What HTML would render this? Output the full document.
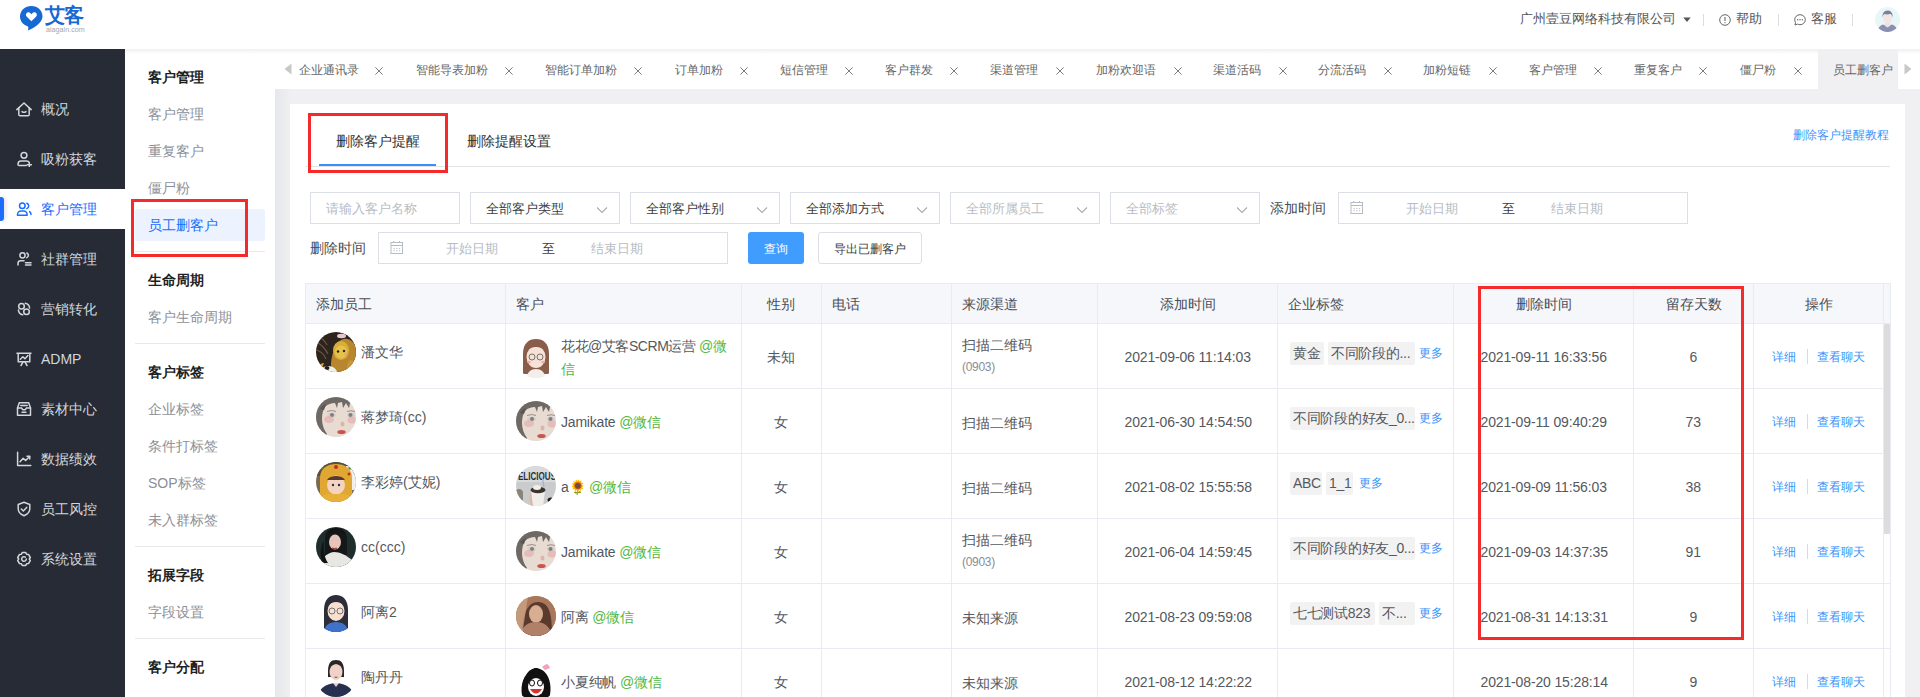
<!DOCTYPE html><html><head><meta charset="utf-8"><style>
*{box-sizing:border-box;margin:0;padding:0}
html,body{width:1920px;height:697px;overflow:hidden;background:#fff;font-family:"Liberation Sans",sans-serif;color:#606266}
div,span{position:absolute;white-space:nowrap}
.t{line-height:1}
</style></head><body><div style="left:0;top:0;width:1920px;height:49px;background:#fff"></div>
<div style="left:125px;top:49px;width:1795px;height:6px;background:linear-gradient(#ededed,rgba(255,255,255,0))"></div>
<div style="left:0;top:49px;width:125px;height:648px;background:#262b35"></div>
<svg style="position:absolute;left:19px;top:5px" width="26" height="28" viewBox="0 0 26 28">
<path d="M12.5 1C6 1 1 5.6 1 11.6c0 4.8 3.3 8.3 7.4 9.7.9.4 1.2 1.2.9 2.2l-.4 2.1c5.8-2.6 14.6-8 14.6-14.2C23.5 5.6 18.8 1 12.5 1z" fill="#1768d2"/>
<path d="M12.4 16.2l-4.6-4.5c-1.3-1.3-1.1-3.2.3-4 1.3-.8 2.7-.3 3.4.6l.9.9.9-.9c.8-.9 2.2-1.4 3.4-.6 1.4.8 1.6 2.7.3 4z" fill="#fff"/>
</svg>
<span style="left:45px;top:4px;font-size:20px;line-height:22px;color:#1768d2;font-weight:bold;letter-spacing:-1px">艾客</span>
<span style="left:46px;top:26px;font-size:7.2px;line-height:7px;color:#a8a8a8">aiagain.com</span>
<span style="left:1520px;top:10px;font-size:13px;line-height:18px;color:#555">广州壹豆网络科技有限公司</span>
<svg style="position:absolute;left:1683px;top:17px" width="8" height="6"><path d="M0.3 0.5h7.4l-3.7 4.6z" fill="#555"/></svg>
<div style="left:1703px;top:14px;width:1px;height:12px;background:#ddd"></div>
<div style="left:1778px;top:14px;width:1px;height:12px;background:#ddd"></div>
<div style="left:1852px;top:14px;width:1px;height:12px;background:#ddd"></div>
<svg style="position:absolute;left:1719px;top:14px" width="12" height="12" viewBox="0 0 12 12"><circle cx="6" cy="6" r="5.3" fill="none" stroke="#666" stroke-width="1"/><path d="M6 3v4M6 8.2v1" stroke="#666" stroke-width="1.1"/></svg>
<span style="left:1736px;top:10px;font-size:13px;line-height:18px;color:#555">帮助</span>
<svg style="position:absolute;left:1794px;top:14px" width="12" height="12" viewBox="0 0 12 12"><path d="M6 .7C3 .7.7 2.9.7 5.7c0 1 .3 1.9.8 2.7L1 11l2.6-.9c.7.4 1.5.6 2.4.6 3 0 5.3-2.2 5.3-5S9 .7 6 .7z" fill="none" stroke="#666" stroke-width="1"/><circle cx="3.7" cy="5.8" r=".7" fill="#666"/><circle cx="6" cy="5.8" r=".7" fill="#666"/><circle cx="8.3" cy="5.8" r=".7" fill="#666"/></svg>
<span style="left:1811px;top:10px;font-size:13px;line-height:18px;color:#555">客服</span>
<svg style="position:absolute;left:1875px;top:7px" width="25" height="25" viewBox="0 0 25 25">
<defs><clipPath id="ac"><circle cx="12.5" cy="12.5" r="12.5"/></clipPath></defs>
<g clip-path="url(#ac)"><rect width="25" height="25" fill="#e9f6f7"/>
<path d="M2 25c.5-4 3-6.5 6-7.5l4.5 2 4.5-2c3 1 5.5 3.5 6 7.5z" fill="#8a90b2"/>
<path d="M10 15h5v4l-2.5 1.5L10 19z" fill="#ece2df"/>
<ellipse cx="12.5" cy="11" rx="4.5" ry="5.8" fill="#f1e6e3"/>
<path d="M7.6 10.5c-.6-4 1.5-7 4.9-7s5.6 2.6 5 7c-.4-1.8-1.2-3.2-2.2-3.7-1.6.8-4.4.8-6 .2-.8.6-1.4 1.900-1.7 3.5z" fill="#7a80a0"/>
</g></svg>
<span style="left:41px;top:88.5px;font-size:14px;line-height:40px;color:#d3d6db">概况</span>
<svg style="position:absolute;left:16px;top:100.5px" width="16" height="16" viewBox="0 0 16 16" fill="none" stroke="#d3d6db" stroke-width="1.5" stroke-linejoin="round" stroke-linecap="round"><path d="M.8 8.6L8 2l7.2 6.6"/><path d="M2.8 6.9v6.6c0 .8.5 1.3 1.3 1.3h7.8c.8 0 1.3-.5 1.3-1.3V6.9"/><path d="M6 10.6q2 1.4 4 0"/></svg>
<span style="left:41px;top:138.5px;font-size:14px;line-height:40px;color:#d3d6db">吸粉获客</span>
<svg style="position:absolute;left:16px;top:150.5px" width="16" height="16" viewBox="0 0 16 16" fill="none" stroke="#d3d6db" stroke-width="1.5" stroke-linejoin="round" stroke-linecap="round"><circle cx="8" cy="4.3" r="2.9"/><path d="M10.3 14.6H3c-.6 0-1-.4-1-1v-.4c0-1.7 1.4-3.1 3.1-3.1h5.6c1.1 0 2.1.6 2.6 1.5"/><path d="M13.3 11.6v4.2M11.2 13.7h4.2"/></svg>
<div style="left:0;top:188.5px;width:125px;height:40px;background:#fff"></div>
<div style="left:0;top:196.5px;width:4px;height:24px;background:#1a6dff;border-radius:0 3px 3px 0;box-shadow:2px 0 4px rgba(0,0,0,.12)"></div>
<span style="left:41px;top:188.5px;font-size:14px;line-height:40px;color:#1a6dff">客户管理</span>
<svg style="position:absolute;left:16px;top:200.5px" width="16" height="16" viewBox="0 0 16 16" fill="none" stroke="#1a6dff" stroke-width="1.5" stroke-linejoin="round" stroke-linecap="round"><circle cx="6.3" cy="4.8" r="2.8"/><path d="M1.5 14.3v-.8c0-2 1.6-3.5 3.5-3.5h2.6c2 0 3.5 1.6 3.5 3.5v.8z"/><path d="M10.8 2.2c1.2.5 1.9 1.5 1.9 2.7s-.8 2.2-1.9 2.7M13.6 10.6c.9.7 1.4 1.8 1.4 3"/></svg>
<span style="left:41px;top:238.5px;font-size:14px;line-height:40px;color:#d3d6db">社群管理</span>
<svg style="position:absolute;left:16px;top:250.5px" width="16" height="16" viewBox="0 0 16 16" fill="none" stroke="#d3d6db" stroke-width="1.5" stroke-linejoin="round" stroke-linecap="round"><circle cx="6.5" cy="4.3" r="2.6"/><path d="M10.8 2c1 .5 1.6 1.3 1.6 2.3s-.6 1.9-1.6 2.3"/><path d="M2 14V12.4c0-1.5 1.2-2.6 2.6-2.6H8"/><path d="M9.5 11.8h5.5M9.5 14h5.5"/></svg>
<span style="left:41px;top:288.5px;font-size:14px;line-height:40px;color:#d3d6db">营销转化</span>
<svg style="position:absolute;left:16px;top:300.5px" width="16" height="16" viewBox="0 0 16 16" fill="none" stroke="#d3d6db" stroke-width="1.5" stroke-linejoin="round" stroke-linecap="round"><circle cx="5.5" cy="5.3" r="2.8"/><circle cx="10.5" cy="10.8" r="2.8"/><path d="M9.3 2.3c2.3.5 4 2.4 4.3 4.7M6.7 13.8c-2.3-.5-4-2.4-4.3-4.7"/></svg>
<span style="left:41px;top:338.5px;font-size:14px;line-height:40px;color:#d3d6db">ADMP</span>
<svg style="position:absolute;left:16px;top:350.5px" width="16" height="16" viewBox="0 0 16 16" fill="none" stroke="#d3d6db" stroke-width="1.5" stroke-linejoin="round" stroke-linecap="round"><path d="M1 2.2h14M2.2 2.2v8.5h11.6V2.2"/><path d="M4.3 8.3l2.6-2.6 2 2 3-3.2"/><path d="M5 14.5l2.2-3.8M11 14.5l-2.2-3.8"/></svg>
<span style="left:41px;top:388.5px;font-size:14px;line-height:40px;color:#d3d6db">素材中心</span>
<svg style="position:absolute;left:16px;top:400.5px" width="16" height="16" viewBox="0 0 16 16" fill="none" stroke="#d3d6db" stroke-width="1.5" stroke-linejoin="round" stroke-linecap="round"><path d="M3.3 1.8h9.4l1.8 5.3v7.2h-13V7.1z"/><path d="M1.5 7.1h4.2l1 1.6h2.6l1-1.6h4.2"/><path d="M4.8 4.5h6.4M6 11.3h4"/></svg>
<span style="left:41px;top:438.5px;font-size:14px;line-height:40px;color:#d3d6db">数据绩效</span>
<svg style="position:absolute;left:16px;top:450.5px" width="16" height="16" viewBox="0 0 16 16" fill="none" stroke="#d3d6db" stroke-width="1.5" stroke-linejoin="round" stroke-linecap="round"><path d="M1.6 1.2v13.3h13.2"/><path d="M4 10.8l3.2-3.6 2.4 2.3 4-4"/><path d="M11 5.3h2.7V8"/></svg>
<span style="left:41px;top:488.5px;font-size:14px;line-height:40px;color:#d3d6db">员工风控</span>
<svg style="position:absolute;left:16px;top:500.5px" width="16" height="16" viewBox="0 0 16 16" fill="none" stroke="#d3d6db" stroke-width="1.5" stroke-linejoin="round" stroke-linecap="round"><path d="M8 1.3l5.8 2.2v4.3c0 3.4-2.4 5.6-5.8 7-3.4-1.4-5.8-3.6-5.8-7V3.5z"/><path d="M5.3 8l2 2 3.4-3.6"/></svg>
<span style="left:41px;top:538.5px;font-size:14px;line-height:40px;color:#d3d6db">系统设置</span>
<svg style="position:absolute;left:16px;top:550.5px" width="16" height="16" viewBox="0 0 16 16" fill="none" stroke="#d3d6db" stroke-width="1.5" stroke-linejoin="round" stroke-linecap="round"><path d="M6.2 1.6h3.6l.8 1.7 1.9.1 1.8 3.1-1 1.5 1 1.5-1.8 3.1-1.9.1-.8 1.7H6.2l-.8-1.7-1.9-.1L1.7 9.5l1-1.5-1-1.5 1.8-3.1 1.9-.1z"/><path d="M10.3 8a2.3 2.3 0 1 1-1-1.9"/></svg>
<div style="left:125px;top:49px;width:150px;height:648px;background:#fff"></div>
<span style="left:148px;top:67px;font-size:14px;line-height:20px;color:#1f1f1f;font-weight:bold">客户管理</span>
<span style="left:148px;top:104px;font-size:14px;line-height:20px;color:#8b8f97;font-weight:normal">客户管理</span>
<span style="left:148px;top:140.5px;font-size:14px;line-height:20px;color:#8b8f97;font-weight:normal">重复客户</span>
<span style="left:148px;top:177.5px;font-size:14px;line-height:20px;color:#8b8f97;font-weight:normal">僵尸粉</span>
<div style="left:135px;top:209px;width:130px;height:32px;background:#ecf3fe;border-radius:2px"></div>
<span style="left:148px;top:214.5px;font-size:14px;line-height:20px;color:#1a6dff;font-weight:normal">员工删客户</span>
<div style="left:135px;top:251px;width:130px;height:1px;background:#e9e9e9"></div>
<span style="left:148px;top:269.5px;font-size:14px;line-height:20px;color:#1f1f1f;font-weight:bold">生命周期</span>
<span style="left:148px;top:306.5px;font-size:14px;line-height:20px;color:#8b8f97;font-weight:normal">客户生命周期</span>
<div style="left:135px;top:343px;width:130px;height:1px;background:#e9e9e9"></div>
<span style="left:148px;top:361.5px;font-size:14px;line-height:20px;color:#1f1f1f;font-weight:bold">客户标签</span>
<span style="left:148px;top:398.5px;font-size:14px;line-height:20px;color:#8b8f97;font-weight:normal">企业标签</span>
<span style="left:148px;top:435.5px;font-size:14px;line-height:20px;color:#8b8f97;font-weight:normal">条件打标签</span>
<span style="left:148px;top:472.5px;font-size:14px;line-height:20px;color:#8b8f97;font-weight:normal">SOP标签</span>
<span style="left:148px;top:509.5px;font-size:14px;line-height:20px;color:#8b8f97;font-weight:normal">未入群标签</span>
<div style="left:135px;top:546px;width:130px;height:1px;background:#e9e9e9"></div>
<span style="left:148px;top:564.5px;font-size:14px;line-height:20px;color:#1f1f1f;font-weight:bold">拓展字段</span>
<span style="left:148px;top:601.5px;font-size:14px;line-height:20px;color:#8b8f97;font-weight:normal">字段设置</span>
<div style="left:135px;top:638px;width:130px;height:1px;background:#e9e9e9"></div>
<span style="left:148px;top:656.5px;font-size:14px;line-height:20px;color:#1f1f1f;font-weight:bold">客户分配</span>
<div style="left:275px;top:89px;width:1645px;height:608px;background:#f0f0f3"></div>
<div style="left:275px;top:89px;width:16px;height:608px;background:linear-gradient(90deg,#e6e7ea,rgba(240,241,243,0))"></div>
<div style="left:275px;top:49px;width:1645px;height:40px;background:#fff"></div>
<div style="left:125px;top:49px;width:1795px;height:5px;background:linear-gradient(#efefef,rgba(255,255,255,0))"></div>
<div style="left:1818px;top:49px;width:80px;height:40px;background:#f0f0f3"></div>
<span style="left:299px;top:62px;font-size:12px;line-height:16px;color:#666">企业通讯录</span>
<svg style="position:absolute;left:374.5px;top:66.5px" width="8" height="8" viewBox="0 0 8 8"><path d="M.4 .4l7.2 7.2M7.6 .4L.4 7.6" stroke="#6a6e78" stroke-width=".9"/></svg>
<span style="left:416px;top:62px;font-size:12px;line-height:16px;color:#666">智能导表加粉</span>
<svg style="position:absolute;left:504.5px;top:66.5px" width="8" height="8" viewBox="0 0 8 8"><path d="M.4 .4l7.2 7.2M7.6 .4L.4 7.6" stroke="#6a6e78" stroke-width=".9"/></svg>
<span style="left:545px;top:62px;font-size:12px;line-height:16px;color:#666">智能订单加粉</span>
<svg style="position:absolute;left:633.5px;top:66.5px" width="8" height="8" viewBox="0 0 8 8"><path d="M.4 .4l7.2 7.2M7.6 .4L.4 7.6" stroke="#6a6e78" stroke-width=".9"/></svg>
<span style="left:675px;top:62px;font-size:12px;line-height:16px;color:#666">订单加粉</span>
<svg style="position:absolute;left:739.5px;top:66.5px" width="8" height="8" viewBox="0 0 8 8"><path d="M.4 .4l7.2 7.2M7.6 .4L.4 7.6" stroke="#6a6e78" stroke-width=".9"/></svg>
<span style="left:779.5px;top:62px;font-size:12px;line-height:16px;color:#666">短信管理</span>
<svg style="position:absolute;left:844.5px;top:66.5px" width="8" height="8" viewBox="0 0 8 8"><path d="M.4 .4l7.2 7.2M7.6 .4L.4 7.6" stroke="#6a6e78" stroke-width=".9"/></svg>
<span style="left:885px;top:62px;font-size:12px;line-height:16px;color:#666">客户群发</span>
<svg style="position:absolute;left:949.5px;top:66.5px" width="8" height="8" viewBox="0 0 8 8"><path d="M.4 .4l7.2 7.2M7.6 .4L.4 7.6" stroke="#6a6e78" stroke-width=".9"/></svg>
<span style="left:990px;top:62px;font-size:12px;line-height:16px;color:#666">渠道管理</span>
<svg style="position:absolute;left:1055.5px;top:66.5px" width="8" height="8" viewBox="0 0 8 8"><path d="M.4 .4l7.2 7.2M7.6 .4L.4 7.6" stroke="#6a6e78" stroke-width=".9"/></svg>
<span style="left:1095.6px;top:62px;font-size:12px;line-height:16px;color:#666">加粉欢迎语</span>
<svg style="position:absolute;left:1173.5px;top:66.5px" width="8" height="8" viewBox="0 0 8 8"><path d="M.4 .4l7.2 7.2M7.6 .4L.4 7.6" stroke="#6a6e78" stroke-width=".9"/></svg>
<span style="left:1213px;top:62px;font-size:12px;line-height:16px;color:#666">渠道活码</span>
<svg style="position:absolute;left:1278.5px;top:66.5px" width="8" height="8" viewBox="0 0 8 8"><path d="M.4 .4l7.2 7.2M7.6 .4L.4 7.6" stroke="#6a6e78" stroke-width=".9"/></svg>
<span style="left:1318px;top:62px;font-size:12px;line-height:16px;color:#666">分流活码</span>
<svg style="position:absolute;left:1383.5px;top:66.5px" width="8" height="8" viewBox="0 0 8 8"><path d="M.4 .4l7.2 7.2M7.6 .4L.4 7.6" stroke="#6a6e78" stroke-width=".9"/></svg>
<span style="left:1423.4px;top:62px;font-size:12px;line-height:16px;color:#666">加粉短链</span>
<svg style="position:absolute;left:1488.5px;top:66.5px" width="8" height="8" viewBox="0 0 8 8"><path d="M.4 .4l7.2 7.2M7.6 .4L.4 7.6" stroke="#6a6e78" stroke-width=".9"/></svg>
<span style="left:1528.5px;top:62px;font-size:12px;line-height:16px;color:#666">客户管理</span>
<svg style="position:absolute;left:1593.5px;top:66.5px" width="8" height="8" viewBox="0 0 8 8"><path d="M.4 .4l7.2 7.2M7.6 .4L.4 7.6" stroke="#6a6e78" stroke-width=".9"/></svg>
<span style="left:1634px;top:62px;font-size:12px;line-height:16px;color:#666">重复客户</span>
<svg style="position:absolute;left:1698.5px;top:66.5px" width="8" height="8" viewBox="0 0 8 8"><path d="M.4 .4l7.2 7.2M7.6 .4L.4 7.6" stroke="#6a6e78" stroke-width=".9"/></svg>
<span style="left:1739.6px;top:62px;font-size:12px;line-height:16px;color:#666">僵尸粉</span>
<svg style="position:absolute;left:1793.5px;top:66.5px" width="8" height="8" viewBox="0 0 8 8"><path d="M.4 .4l7.2 7.2M7.6 .4L.4 7.6" stroke="#6a6e78" stroke-width=".9"/></svg>
<span style="left:1832.6px;top:62px;font-size:12px;line-height:16px;color:#666">员工删客户</span>
<svg style="position:absolute;left:284px;top:63px" width="8" height="12"><path d="M7.5 .5v11L.5 6z" fill="#c8c8c8"/></svg>
<svg style="position:absolute;left:1904px;top:63px" width="8" height="12"><path d="M.5 .5v11L7.5 6z" fill="#c8c8c8"/></svg>
<div style="left:290px;top:104px;width:1615px;height:600px;background:#fff"></div>
<span style="left:336px;top:131px;font-size:14px;line-height:20px;color:#303133">删除客户提醒</span>
<span style="left:467px;top:131px;font-size:14px;line-height:20px;color:#303133">删除提醒设置</span>
<div style="left:306px;top:166px;width:1584px;height:1px;background:#e4e4e4"></div>
<div style="left:319px;top:164px;width:117px;height:2px;background:#3a8ef6"></div>
<span style="left:1793px;top:127px;font-size:12px;line-height:16px;color:#3f96fb">删除客户提醒教程</span>
<div style="left:308px;top:113px;width:140px;height:60px;border:3px solid #f52a2a"></div>
<div style="left:131px;top:199px;width:117px;height:58px;border:3px solid #f52a2a"></div>
<div style="left:310px;top:192px;width:150px;height:32px;border:1px solid #dcdfe6;background:#fff"></div>
<span style="left:326px;top:200px;font-size:13px;line-height:18px;color:#b8bcc4">请输入客户名称</span>
<div style="left:470px;top:192px;width:150px;height:32px;border:1px solid #dcdfe6;background:#fff"></div>
<span style="left:486px;top:200px;font-size:13px;line-height:18px;color:#3a3d42">全部客户类型</span>
<svg style="position:absolute;left:596px;top:206px" width="12" height="8" viewBox="0 0 12 8"><path d="M1 1.5l5 5 5-5" fill="none" stroke="#a8abb2" stroke-width="1.1"/></svg>
<div style="left:630px;top:192px;width:150px;height:32px;border:1px solid #dcdfe6;background:#fff"></div>
<span style="left:646px;top:200px;font-size:13px;line-height:18px;color:#3a3d42">全部客户性别</span>
<svg style="position:absolute;left:756px;top:206px" width="12" height="8" viewBox="0 0 12 8"><path d="M1 1.5l5 5 5-5" fill="none" stroke="#a8abb2" stroke-width="1.1"/></svg>
<div style="left:790px;top:192px;width:150px;height:32px;border:1px solid #dcdfe6;background:#fff"></div>
<span style="left:806px;top:200px;font-size:13px;line-height:18px;color:#3a3d42">全部添加方式</span>
<svg style="position:absolute;left:916px;top:206px" width="12" height="8" viewBox="0 0 12 8"><path d="M1 1.5l5 5 5-5" fill="none" stroke="#a8abb2" stroke-width="1.1"/></svg>
<div style="left:950px;top:192px;width:150px;height:32px;border:1px solid #dcdfe6;background:#fff"></div>
<span style="left:966px;top:200px;font-size:13px;line-height:18px;color:#b8bcc4">全部所属员工</span>
<svg style="position:absolute;left:1076px;top:206px" width="12" height="8" viewBox="0 0 12 8"><path d="M1 1.5l5 5 5-5" fill="none" stroke="#a8abb2" stroke-width="1.1"/></svg>
<div style="left:1110px;top:192px;width:150px;height:32px;border:1px solid #dcdfe6;background:#fff"></div>
<span style="left:1126px;top:200px;font-size:13px;line-height:18px;color:#b8bcc4">全部标签</span>
<svg style="position:absolute;left:1236px;top:206px" width="12" height="8" viewBox="0 0 12 8"><path d="M1 1.5l5 5 5-5" fill="none" stroke="#a8abb2" stroke-width="1.1"/></svg>
<span style="left:1270px;top:198px;font-size:14px;line-height:20px;color:#4a4d53">添加时间</span>
<span style="left:310px;top:238px;font-size:14px;line-height:20px;color:#4a4d53">删除时间</span>
<div style="left:1338px;top:192px;width:350px;height:32px;border:1px solid #dcdfe6;background:#fff"></div>
<svg style="position:absolute;left:1350px;top:201px" width="13" height="13" viewBox="0 0 13 13" fill="none" stroke="#b6bcc6" stroke-width="1"><rect x="1" y="1.5" width="11.5" height="11"/><path d="M1 4.5h11.5M3.5 0v2M9.5 0v2"/><path d="M3.5 7.5h1.2M6.2 7.5h1.2M8.9 7.5h1.2M3.5 9.7h1.2M6.2 9.7h1.2M8.9 9.7h1.2" stroke-width=".9"/></svg>
<span style="left:1406px;top:200px;font-size:13px;line-height:18px;color:#b8bcc4">开始日期</span>
<span style="left:1502px;top:200px;font-size:13px;line-height:18px;color:#3a3d42">至</span>
<span style="left:1551px;top:200px;font-size:13px;line-height:18px;color:#b8bcc4">结束日期</span>
<div style="left:378px;top:232px;width:350px;height:32px;border:1px solid #dcdfe6;background:#fff"></div>
<svg style="position:absolute;left:390px;top:241px" width="13" height="13" viewBox="0 0 13 13" fill="none" stroke="#b6bcc6" stroke-width="1"><rect x="1" y="1.5" width="11.5" height="11"/><path d="M1 4.5h11.5M3.5 0v2M9.5 0v2"/><path d="M3.5 7.5h1.2M6.2 7.5h1.2M8.9 7.5h1.2M3.5 9.7h1.2M6.2 9.7h1.2M8.9 9.7h1.2" stroke-width=".9"/></svg>
<span style="left:446px;top:240px;font-size:13px;line-height:18px;color:#b8bcc4">开始日期</span>
<span style="left:542px;top:240px;font-size:13px;line-height:18px;color:#3a3d42">至</span>
<span style="left:591px;top:240px;font-size:13px;line-height:18px;color:#b8bcc4">结束日期</span>
<div style="left:748px;top:232px;width:56px;height:32px;background:#419cff;border-radius:3px"></div>
<span style="left:764px;top:240px;font-size:12px;line-height:18px;color:#fff">查询</span>
<div style="left:818px;top:232px;width:104px;height:32px;border:1px solid #dcdfe6;border-radius:3px;background:#fff"></div>
<span style="left:834px;top:240px;font-size:12px;line-height:18px;color:#3a3d42">导出已删客户</span>
<div style="left:305px;top:283px;width:1585px;height:40px;background:#f5f7fa"></div>
<div style="left:305px;top:283px;width:1585px;height:1px;background:#e9ebf2"></div>
<div style="left:305px;top:323px;width:1585px;height:1px;background:#e9ebf2"></div>
<div style="left:305px;top:388px;width:1585px;height:1px;background:#e9ebf2"></div>
<div style="left:305px;top:453px;width:1585px;height:1px;background:#e9ebf2"></div>
<div style="left:305px;top:518px;width:1585px;height:1px;background:#e9ebf2"></div>
<div style="left:305px;top:583px;width:1585px;height:1px;background:#e9ebf2"></div>
<div style="left:305px;top:648px;width:1585px;height:1px;background:#e9ebf2"></div>
<div style="left:305px;top:713px;width:1585px;height:1px;background:#e9ebf2"></div>
<div style="left:305px;top:283px;width:1px;height:414px;background:#e9ebf2"></div>
<div style="left:505px;top:283px;width:1px;height:414px;background:#e9ebf2"></div>
<div style="left:741px;top:283px;width:1px;height:414px;background:#e9ebf2"></div>
<div style="left:821px;top:283px;width:1px;height:414px;background:#e9ebf2"></div>
<div style="left:951px;top:283px;width:1px;height:414px;background:#e9ebf2"></div>
<div style="left:1097px;top:283px;width:1px;height:414px;background:#e9ebf2"></div>
<div style="left:1277px;top:283px;width:1px;height:414px;background:#e9ebf2"></div>
<div style="left:1453px;top:283px;width:1px;height:414px;background:#e9ebf2"></div>
<div style="left:1633px;top:283px;width:1px;height:414px;background:#e9ebf2"></div>
<div style="left:1753px;top:283px;width:1px;height:414px;background:#e9ebf2"></div>
<div style="left:1883px;top:283px;width:1px;height:414px;background:#e9ebf2"></div>
<div style="left:1890px;top:283px;width:1px;height:414px;background:#e9ebf2"></div>
<div style="left:1884px;top:324px;width:6px;height:210px;background:#dcdcdc;border-radius:1px"></div>
<span style="left:316px;top:294px;font-size:14px;line-height:20px;color:#4a4e56">添加员工</span>
<span style="left:516px;top:294px;font-size:14px;line-height:20px;color:#4a4e56">客户</span>
<span style="left:767.0px;top:294px;font-size:14px;line-height:20px;color:#4a4e56">性别</span>
<span style="left:832px;top:294px;font-size:14px;line-height:20px;color:#4a4e56">电话</span>
<span style="left:962px;top:294px;font-size:14px;line-height:20px;color:#4a4e56">来源渠道</span>
<span style="left:1159.5px;top:294px;font-size:14px;line-height:20px;color:#4a4e56">添加时间</span>
<span style="left:1288px;top:294px;font-size:14px;line-height:20px;color:#4a4e56">企业标签</span>
<span style="left:1515.5px;top:294px;font-size:14px;line-height:20px;color:#4a4e56">删除时间</span>
<span style="left:1665.5px;top:294px;font-size:14px;line-height:20px;color:#4a4e56">留存天数</span>
<span style="left:1804.5px;top:294px;font-size:14px;line-height:20px;color:#4a4e56">操作</span>
<svg style="position:absolute;left:316px;top:331.5px" width="40" height="40" viewBox="0 0 40 40"><defs><clipPath id="cpe0"><circle cx="20" cy="20" r="20"/></clipPath></defs><g clip-path="url(#cpe0)"><rect width="40" height="40" fill="#2e241e"/>
<path d="M0 10c5 2 9 6 12 12M0 18c4 1 8 4 10 9M2 4c4 2 7 5 9 9" stroke="#6a5848" stroke-width="1.2" fill="none"/>
<path d="M16 40c-2-6-1-14 2-22 2-8 8-12 13-11 6 1 9 6 9 13v20z" fill="#b8862e"/>
<ellipse cx="25" cy="18.5" rx="8" ry="9.5" fill="#d8ae3a"/>
<ellipse cx="25" cy="20" rx="6" ry="6.5" fill="#e6c24a"/>
<circle cx="22" cy="19.5" r="1.2" fill="#2a2018"/><circle cx="28" cy="19" r="1.2" fill="#2a2018"/>
<ellipse cx="30" cy="22.5" rx="1.5" ry="1" fill="#e89a8a"/>
<path d="M34 28c4 0 6 4 6 8v4h-8c-2-4-1-10 2-12z" fill="#c89636"/>
<ellipse cx="25.5" cy="4" rx="4.5" ry="2.2" fill="#e8c8d0"/>
<path d="M4 40c1-4 4-6 8-6s8 2 9 6z" fill="#f2efe8"/><ellipse cx="11" cy="36" rx="2.5" ry="2" fill="#1e1e1e"/>
<path d="M3 34c1-2 3-3 5-3l-2 5z" fill="#d8a838"/></g></svg>
<span style="left:361px;top:341.5px;font-size:14px;line-height:20px;color:#55585e">潘文华</span>
<svg style="position:absolute;left:516px;top:337.5px" width="40" height="40" viewBox="0 0 40 40"><defs><clipPath id="cpc0"><circle cx="20" cy="20" r="20"/></clipPath></defs><g clip-path="url(#cpc0)"><rect width="40" height="40" fill="#fff"/>
<path d="M7 36V16C7 5 13 1 20 1s13 4 13 15v20z" fill="#8a5c4a"/>
<ellipse cx="20" cy="19" rx="9.5" ry="11" fill="#f6e1d6"/>
<path d="M10 14c2-7 6-9 10-9s8 2 10 9c-3-4-7-5-10-5s-7 1-10 5z" fill="#8a5c4a"/>
<circle cx="16" cy="19" r="3" fill="none" stroke="#666" stroke-width=".9"/><circle cx="24" cy="19" r="3" fill="none" stroke="#666" stroke-width=".9"/>
<ellipse cx="13" cy="24" rx="2" ry="1.3" fill="#f0b0a8"/><ellipse cx="27" cy="24" rx="2" ry="1.3" fill="#f0b0a8"/>
<path d="M11 40c0-6 4-9 9-9s9 3 9 9z" fill="#f2efea"/></g></svg>
<span style="left:561px;top:334.5px;font-size:14px;line-height:23px;letter-spacing:-0.45px;color:#55585e">花花@艾客SCRM运营 <span style="position:static;color:#52b840">@微</span><br><span style="position:static;color:#52b840">信</span></span>
<span style="left:767px;top:346.5px;font-size:14px;line-height:20px;color:#55585e">未知</span>
<span style="left:962px;top:334.5px;font-size:14px;line-height:20px;color:#55585e">扫描二维码</span>
<span style="left:962px;top:358.0px;font-size:12px;line-height:18px;letter-spacing:-0.3px;color:#8a8d93">(0903)</span>
<span style="left:1124.5px;top:346.5px;font-size:14px;line-height:20px;letter-spacing:-0.14px;color:#55585e">2021-09-06 11:14:03</span>
<div style="left:1290px;top:342.0px;width:34px;height:23px;background:#f2f2f2;border-radius:2px"></div>
<span style="left:1293px;top:343.0px;font-size:14px;line-height:20px;letter-spacing:-0.3px;color:#55585e">黄金</span>
<div style="left:1328px;top:342.0px;width:87px;height:23px;background:#f2f2f2;border-radius:2px"></div>
<span style="left:1331px;top:343.0px;font-size:14px;line-height:20px;letter-spacing:-0.3px;color:#55585e">不同阶段的...</span>
<span style="left:1419px;top:344.5px;font-size:12px;line-height:16px;color:#3892fa">更多</span>
<span style="left:1480.5px;top:346.5px;font-size:14px;line-height:20px;letter-spacing:-0.14px;color:#55585e">2021-09-11 16:33:56</span>
<span style="left:1689.5px;top:346.5px;font-size:14px;line-height:20px;color:#55585e">6</span>
<span style="left:1772px;top:347.5px;font-size:12px;line-height:18px;color:#3892fa">详细</span>
<div style="left:1807px;top:348.5px;width:1px;height:15px;background:#d8dade"></div>
<span style="left:1817px;top:347.5px;font-size:12px;line-height:18px;color:#3892fa">查看聊天</span>
<svg style="position:absolute;left:316px;top:396.5px" width="40" height="40" viewBox="0 0 40 40"><defs><clipPath id="cpe1"><circle cx="20" cy="20" r="20"/></clipPath></defs><g clip-path="url(#cpe1)"><rect width="40" height="40" fill="#e7dbd2"/>
<path d="M-1-1h42v10c-3-2-5-3-7-3l-1 5-3-5-3 5-1-6-4 1-1 5-2-5c-4 0-7 1-10 4-2 3-3 7-3 12 0 6 2 11 5 15l-2 4H-1z" fill="#6e6964"/>
<path d="M4 12c1-2 3-4 6-5l-2 6z" fill="#5a5652"/>
<ellipse cx="15.5" cy="18" rx="4.2" ry="2.6" fill="#d8cfc8"/><circle cx="16" cy="18" r="2" fill="#7a8088"/>
<ellipse cx="35" cy="18" rx="4" ry="2.6" fill="#d8cfc8"/><circle cx="34.5" cy="18" r="2" fill="#7a8088"/>
<path d="M11 14.5q5-2 9 0M31 14.5q4-1.5 8 0" stroke="#8a7a72" stroke-width=".8" fill="none"/>
<ellipse cx="13" cy="22.5" rx="5" ry="3.5" fill="#e2a8a8" opacity=".6"/><ellipse cx="36" cy="23" rx="4.5" ry="3.5" fill="#e2a8a8" opacity=".6"/>
<ellipse cx="26.5" cy="27" rx="2" ry="2.5" fill="#dda9a0" opacity=".8"/>
<ellipse cx="25.5" cy="35" rx="4.2" ry="2" fill="#c9564e"/></g></svg>
<span style="left:361px;top:406.5px;font-size:14px;line-height:20px;color:#55585e">蒋梦琦(cc)</span>
<svg style="position:absolute;left:516px;top:400.5px" width="40" height="40" viewBox="0 0 40 40"><defs><clipPath id="cpc1"><circle cx="20" cy="20" r="20"/></clipPath></defs><g clip-path="url(#cpc1)"><rect width="40" height="40" fill="#e7dbd2"/>
<path d="M-1-1h42v10c-3-2-5-3-7-3l-1 5-3-5-3 5-1-6-4 1-1 5-2-5c-4 0-7 1-10 4-2 3-3 7-3 12 0 6 2 11 5 15l-2 4H-1z" fill="#6e6964"/>
<path d="M4 12c1-2 3-4 6-5l-2 6z" fill="#5a5652"/>
<ellipse cx="15.5" cy="18" rx="4.2" ry="2.6" fill="#d8cfc8"/><circle cx="16" cy="18" r="2" fill="#7a8088"/>
<ellipse cx="35" cy="18" rx="4" ry="2.6" fill="#d8cfc8"/><circle cx="34.5" cy="18" r="2" fill="#7a8088"/>
<path d="M11 14.5q5-2 9 0M31 14.5q4-1.5 8 0" stroke="#8a7a72" stroke-width=".8" fill="none"/>
<ellipse cx="13" cy="22.5" rx="5" ry="3.5" fill="#e2a8a8" opacity=".6"/><ellipse cx="36" cy="23" rx="4.5" ry="3.5" fill="#e2a8a8" opacity=".6"/>
<ellipse cx="26.5" cy="27" rx="2" ry="2.5" fill="#dda9a0" opacity=".8"/>
<ellipse cx="25.5" cy="35" rx="4.2" ry="2" fill="#c9564e"/></g></svg>
<span style="left:561px;top:411.5px;font-size:14px;line-height:20px;letter-spacing:-0.2px;color:#55585e">Jamikate <span style="position:static;color:#52b840">@微信</span></span>
<span style="left:774px;top:411.5px;font-size:14px;line-height:20px;color:#55585e">女</span>
<span style="left:962px;top:412.5px;font-size:14px;line-height:20px;color:#55585e">扫描二维码</span>
<span style="left:1124.5px;top:411.5px;font-size:14px;line-height:20px;letter-spacing:-0.14px;color:#55585e">2021-06-30 14:54:50</span>
<div style="left:1290px;top:407.0px;width:125px;height:23px;background:#f2f2f2;border-radius:2px"></div>
<span style="left:1293px;top:408.0px;font-size:14px;line-height:20px;letter-spacing:-0.3px;color:#55585e">不同阶段的好友_0...</span>
<span style="left:1419px;top:409.5px;font-size:12px;line-height:16px;color:#3892fa">更多</span>
<span style="left:1480.5px;top:411.5px;font-size:14px;line-height:20px;letter-spacing:-0.14px;color:#55585e">2021-09-11 09:40:29</span>
<span style="left:1685.5px;top:411.5px;font-size:14px;line-height:20px;color:#55585e">73</span>
<span style="left:1772px;top:412.5px;font-size:12px;line-height:18px;color:#3892fa">详细</span>
<div style="left:1807px;top:413.5px;width:1px;height:15px;background:#d8dade"></div>
<span style="left:1817px;top:412.5px;font-size:12px;line-height:18px;color:#3892fa">查看聊天</span>
<svg style="position:absolute;left:316px;top:461.5px" width="40" height="40" viewBox="0 0 40 40"><defs><clipPath id="cpe2"><circle cx="20" cy="20" r="20"/></clipPath></defs><g clip-path="url(#cpe2)"><rect width="40" height="40" fill="#7a6a52"/>
<path d="M0 0h40v14H0z" fill="#5a4e40"/><path d="M30 4h10v24h-10z" fill="#f2f0ec"/>
<path d="M4 16C4 6 12 2 20 2s16 4 16 14v24H4z" fill="#e0a832"/>
<path d="M6 8l-4-4 3-1 3 3zM34 8l4-4-3-1-3 3z" fill="#5a8a3a"/><circle cx="20" cy="5" r="2" fill="#c82a20"/><circle cx="33" cy="12" r="1.5" fill="#c82a20"/>
<ellipse cx="20" cy="23" rx="9" ry="9.5" fill="#f3d4c2"/>
<path d="M11 18c2-3 5-4 9-4s7 1 9 4" fill="#5a3a2a"/><circle cx="17" cy="23" r="1.2" fill="#333"/><circle cx="23" cy="23" r="1.2" fill="#333"/>
<path d="M6 34c4-2 8-2 14-2s10 0 14 2v6H6z" fill="#e8b038"/></g></svg>
<span style="left:361px;top:471.5px;font-size:14px;line-height:20px;color:#55585e">李彩婷(艾妮)</span>
<svg style="position:absolute;left:516px;top:465.5px" width="40" height="40" viewBox="0 0 40 40"><defs><clipPath id="cpc2"><circle cx="20" cy="20" r="20"/></clipPath></defs><g clip-path="url(#cpc2)"><rect width="40" height="40" fill="#c9cbcd"/>
<rect width="40" height="16" fill="#d9dadb"/>
<text x="2" y="14" font-size="10" font-family="Liberation Sans" font-weight="bold" fill="#2c3036" textLength="38" lengthAdjust="spacingAndGlyphs">ELICIOUS</text>
<path d="M0 24c3-2 6-1 7 2v8H0z" fill="#8a8478"/>
<path d="M15 40c-2-6-2-12 1-16 2-1 3 1 3 3l1 13z" fill="#dcb9a6"/>
<path d="M15 25h14l-2 15h-10z" fill="#efeeea"/>
<ellipse cx="22" cy="24" rx="7.5" ry="3.2" fill="#3c3230"/><ellipse cx="21" cy="21.5" rx="4" ry="2.5" fill="#f2eee8"/>
<path d="M26 10l2 11" stroke="#9ab0d8" stroke-width="1.2"/>
<ellipse cx="35" cy="34" rx="3.5" ry="2.5" fill="#1e1e22"/></g></svg>
<span style="left:561px;top:476.5px;font-size:14px;line-height:20px;letter-spacing:-0.2px;color:#55585e">a🌻 <span style="position:static;color:#52b840">@微信</span></span>
<span style="left:774px;top:476.5px;font-size:14px;line-height:20px;color:#55585e">女</span>
<span style="left:962px;top:477.5px;font-size:14px;line-height:20px;color:#55585e">扫描二维码</span>
<span style="left:1124.5px;top:476.5px;font-size:14px;line-height:20px;letter-spacing:-0.14px;color:#55585e">2021-08-02 15:55:58</span>
<div style="left:1290px;top:472.0px;width:32px;height:23px;background:#f2f2f2;border-radius:2px"></div>
<span style="left:1293px;top:473.0px;font-size:14px;line-height:20px;letter-spacing:-0.3px;color:#55585e">ABC</span>
<div style="left:1326px;top:472.0px;width:27px;height:23px;background:#f2f2f2;border-radius:2px"></div>
<span style="left:1329px;top:473.0px;font-size:14px;line-height:20px;letter-spacing:-0.3px;color:#55585e">1_1</span>
<span style="left:1359px;top:474.5px;font-size:12px;line-height:16px;color:#3892fa">更多</span>
<span style="left:1480.5px;top:476.5px;font-size:14px;line-height:20px;letter-spacing:-0.14px;color:#55585e">2021-09-09 11:56:03</span>
<span style="left:1685.5px;top:476.5px;font-size:14px;line-height:20px;color:#55585e">38</span>
<span style="left:1772px;top:477.5px;font-size:12px;line-height:18px;color:#3892fa">详细</span>
<div style="left:1807px;top:478.5px;width:1px;height:15px;background:#d8dade"></div>
<span style="left:1817px;top:477.5px;font-size:12px;line-height:18px;color:#3892fa">查看聊天</span>
<svg style="position:absolute;left:316px;top:526.5px" width="40" height="40" viewBox="0 0 40 40"><defs><clipPath id="cpe3"><circle cx="20" cy="20" r="20"/></clipPath></defs><g clip-path="url(#cpe3)"><rect width="40" height="40" fill="#1f2d2c"/>
<path d="M9 12C9 4 14 1 20 1s11 4 11 11v16H9z" fill="#141818"/>
<ellipse cx="19" cy="15" rx="6" ry="7.5" fill="#e6c4ba"/>
<path d="M12 6c2-4 6-5 9-5 5 0 8 3 9 7-3-2-6-3-9-3-4 0-7 1-9 1z" fill="#141414"/>
<path d="M16 21q3 1 5 0" stroke="#b04040" stroke-width="1.2" fill="none"/>
<path d="M4 40c1-8 6-14 14-15 6 0 12 3 18 8l4 7z" fill="#e9e7e4"/>
<path d="M8 14c-1 8 0 16 4 22l-6 0C4 28 4 20 8 14z" fill="#101414"/></g></svg>
<span style="left:361px;top:536.5px;font-size:14px;line-height:20px;color:#55585e">cc(ccc)</span>
<svg style="position:absolute;left:516px;top:530.5px" width="40" height="40" viewBox="0 0 40 40"><defs><clipPath id="cpc3"><circle cx="20" cy="20" r="20"/></clipPath></defs><g clip-path="url(#cpc3)"><rect width="40" height="40" fill="#e7dbd2"/>
<path d="M-1-1h42v10c-3-2-5-3-7-3l-1 5-3-5-3 5-1-6-4 1-1 5-2-5c-4 0-7 1-10 4-2 3-3 7-3 12 0 6 2 11 5 15l-2 4H-1z" fill="#6e6964"/>
<path d="M4 12c1-2 3-4 6-5l-2 6z" fill="#5a5652"/>
<ellipse cx="15.5" cy="18" rx="4.2" ry="2.6" fill="#d8cfc8"/><circle cx="16" cy="18" r="2" fill="#7a8088"/>
<ellipse cx="35" cy="18" rx="4" ry="2.6" fill="#d8cfc8"/><circle cx="34.5" cy="18" r="2" fill="#7a8088"/>
<path d="M11 14.5q5-2 9 0M31 14.5q4-1.5 8 0" stroke="#8a7a72" stroke-width=".8" fill="none"/>
<ellipse cx="13" cy="22.5" rx="5" ry="3.5" fill="#e2a8a8" opacity=".6"/><ellipse cx="36" cy="23" rx="4.5" ry="3.5" fill="#e2a8a8" opacity=".6"/>
<ellipse cx="26.5" cy="27" rx="2" ry="2.5" fill="#dda9a0" opacity=".8"/>
<ellipse cx="25.5" cy="35" rx="4.2" ry="2" fill="#c9564e"/></g></svg>
<span style="left:561px;top:541.5px;font-size:14px;line-height:20px;letter-spacing:-0.2px;color:#55585e">Jamikate <span style="position:static;color:#52b840">@微信</span></span>
<span style="left:774px;top:541.5px;font-size:14px;line-height:20px;color:#55585e">女</span>
<span style="left:962px;top:529.5px;font-size:14px;line-height:20px;color:#55585e">扫描二维码</span>
<span style="left:962px;top:553.0px;font-size:12px;line-height:18px;letter-spacing:-0.3px;color:#8a8d93">(0903)</span>
<span style="left:1124.5px;top:541.5px;font-size:14px;line-height:20px;letter-spacing:-0.14px;color:#55585e">2021-06-04 14:59:45</span>
<div style="left:1290px;top:537.0px;width:125px;height:23px;background:#f2f2f2;border-radius:2px"></div>
<span style="left:1293px;top:538.0px;font-size:14px;line-height:20px;letter-spacing:-0.3px;color:#55585e">不同阶段的好友_0...</span>
<span style="left:1419px;top:539.5px;font-size:12px;line-height:16px;color:#3892fa">更多</span>
<span style="left:1480.5px;top:541.5px;font-size:14px;line-height:20px;letter-spacing:-0.14px;color:#55585e">2021-09-03 14:37:35</span>
<span style="left:1685.5px;top:541.5px;font-size:14px;line-height:20px;color:#55585e">91</span>
<span style="left:1772px;top:542.5px;font-size:12px;line-height:18px;color:#3892fa">详细</span>
<div style="left:1807px;top:543.5px;width:1px;height:15px;background:#d8dade"></div>
<span style="left:1817px;top:542.5px;font-size:12px;line-height:18px;color:#3892fa">查看聊天</span>
<svg style="position:absolute;left:316px;top:591.5px" width="40" height="40" viewBox="0 0 40 40"><defs><clipPath id="cpe4"><circle cx="20" cy="20" r="20"/></clipPath></defs><g clip-path="url(#cpe4)"><rect width="40" height="40" fill="#fff"/>
<path d="M8 40V18C8 8 13 3 20 3s12 5 12 15v22z" fill="#2e2e3a"/>
<ellipse cx="20" cy="19" rx="8.5" ry="10" fill="#f6e0d2"/>
<path d="M11 15c1-7 5-9 9-9s8 2 9 9c-3-4-6-5-9-5s-6 1-9 5z" fill="#2e2e3a"/>
<circle cx="16" cy="19" r="3" fill="none" stroke="#555" stroke-width=".8"/><circle cx="24" cy="19" r="3" fill="none" stroke="#555" stroke-width=".8"/>
<path d="M8 40c0-6 5-10 12-10s12 4 12 10z" fill="#3f72c8"/></g></svg>
<span style="left:361px;top:601.5px;font-size:14px;line-height:20px;color:#55585e">阿离2</span>
<svg style="position:absolute;left:516px;top:595.5px" width="40" height="40" viewBox="0 0 40 40"><defs><clipPath id="cpc4"><circle cx="20" cy="20" r="20"/></clipPath></defs><g clip-path="url(#cpc4)"><rect width="40" height="40" fill="#c09070"/>
<path d="M0 0h40v40H0z" fill="#a8785c"/><path d="M6 40C6 22 10 6 22 6s14 14 14 34z" fill="#5a3a2c"/>
<ellipse cx="20" cy="18" rx="7" ry="9" fill="#d8ae92"/>
<path d="M4 40c2-10 8-14 16-14s14 4 16 14z" fill="#b08068"/>
<path d="M0 0h12L6 40H0z" fill="#d0a888" opacity=".7"/></g></svg>
<span style="left:561px;top:606.5px;font-size:14px;line-height:20px;letter-spacing:-0.2px;color:#55585e">阿离 <span style="position:static;color:#52b840">@微信</span></span>
<span style="left:774px;top:606.5px;font-size:14px;line-height:20px;color:#55585e">女</span>
<span style="left:962px;top:607.5px;font-size:14px;line-height:20px;color:#55585e">未知来源</span>
<span style="left:1124.5px;top:606.5px;font-size:14px;line-height:20px;letter-spacing:-0.14px;color:#55585e">2021-08-23 09:59:08</span>
<div style="left:1290px;top:602.0px;width:85px;height:23px;background:#f2f2f2;border-radius:2px"></div>
<span style="left:1293px;top:603.0px;font-size:14px;line-height:20px;letter-spacing:-0.3px;color:#55585e">七七测试823</span>
<div style="left:1379px;top:602.0px;width:36px;height:23px;background:#f2f2f2;border-radius:2px"></div>
<span style="left:1382px;top:603.0px;font-size:14px;line-height:20px;letter-spacing:-0.3px;color:#55585e">不...</span>
<span style="left:1419px;top:604.5px;font-size:12px;line-height:16px;color:#3892fa">更多</span>
<span style="left:1480.5px;top:606.5px;font-size:14px;line-height:20px;letter-spacing:-0.14px;color:#55585e">2021-08-31 14:13:31</span>
<span style="left:1689.5px;top:606.5px;font-size:14px;line-height:20px;color:#55585e">9</span>
<span style="left:1772px;top:607.5px;font-size:12px;line-height:18px;color:#3892fa">详细</span>
<div style="left:1807px;top:608.5px;width:1px;height:15px;background:#d8dade"></div>
<span style="left:1817px;top:607.5px;font-size:12px;line-height:18px;color:#3892fa">查看聊天</span>
<svg style="position:absolute;left:316px;top:656.5px" width="40" height="40" viewBox="0 0 40 40"><defs><clipPath id="cpe5"><circle cx="20" cy="20" r="20"/></clipPath></defs><g clip-path="url(#cpe5)"><rect width="40" height="40" fill="#fff"/>
<path d="M12 14C12 6 15 3 20 3s8 3 8 11v6H12z" fill="#2a2626"/>
<ellipse cx="20" cy="15" rx="6.5" ry="8" fill="#eed2c8"/>
<path d="M14 10c1-4 3-6 6-6s5 2 6 6c-2-2-4-3-6-3s-4 1-6 3z" fill="#2a2626"/>
<path d="M18.5 20q1.5.8 3 0" stroke="#c04848" stroke-width="1.2" fill="none"/>
<path d="M2 40c1-8 6-13 18-14 12 1 17 6 18 14z" fill="#27304e"/>
<path d="M17 26l3 4 3-4" fill="#eed2c8"/></g></svg>
<span style="left:361px;top:666.5px;font-size:14px;line-height:20px;color:#55585e">陶丹丹</span>
<svg style="position:absolute;left:516px;top:660.5px" width="40" height="40" viewBox="0 0 40 40"><defs><clipPath id="cpc5"><circle cx="20" cy="20" r="20"/></clipPath></defs><g clip-path="url(#cpc5)"><rect width="40" height="40" fill="#fff"/>
<path d="M8 40c-4-8-3-20 2-26 3-5 7-7 10-7s8 2 11 7c4 6 5 18 1 26z" fill="#111"/>
<ellipse cx="20" cy="26" rx="8" ry="9" fill="#fff"/>
<ellipse cx="16" cy="22" rx="2.5" ry="3" fill="#fff" stroke="#111" stroke-width="1"/><ellipse cx="24" cy="22" rx="2.5" ry="3" fill="#fff" stroke="#111" stroke-width="1"/>
<path d="M14 28q6 9 12 0z" fill="#d83030"/>
<path d="M26 6l6-4 2 5-5 2z" fill="#f4a0b8"/></g></svg>
<span style="left:561px;top:671.5px;font-size:14px;line-height:20px;letter-spacing:-0.2px;color:#55585e">小夏纯帆 <span style="position:static;color:#52b840">@微信</span></span>
<span style="left:774px;top:671.5px;font-size:14px;line-height:20px;color:#55585e">女</span>
<span style="left:962px;top:672.5px;font-size:14px;line-height:20px;color:#55585e">未知来源</span>
<span style="left:1124.5px;top:671.5px;font-size:14px;line-height:20px;letter-spacing:-0.14px;color:#55585e">2021-08-12 14:22:22</span>
<span style="left:1480.5px;top:671.5px;font-size:14px;line-height:20px;letter-spacing:-0.14px;color:#55585e">2021-08-20 15:28:14</span>
<span style="left:1689.5px;top:671.5px;font-size:14px;line-height:20px;color:#55585e">9</span>
<span style="left:1772px;top:672.5px;font-size:12px;line-height:18px;color:#3892fa">详细</span>
<div style="left:1807px;top:673.5px;width:1px;height:15px;background:#d8dade"></div>
<span style="left:1817px;top:672.5px;font-size:12px;line-height:18px;color:#3892fa">查看聊天</span>
<div style="left:1478px;top:286px;width:266px;height:354px;border:3px solid #f52a2a"></div></body></html>
